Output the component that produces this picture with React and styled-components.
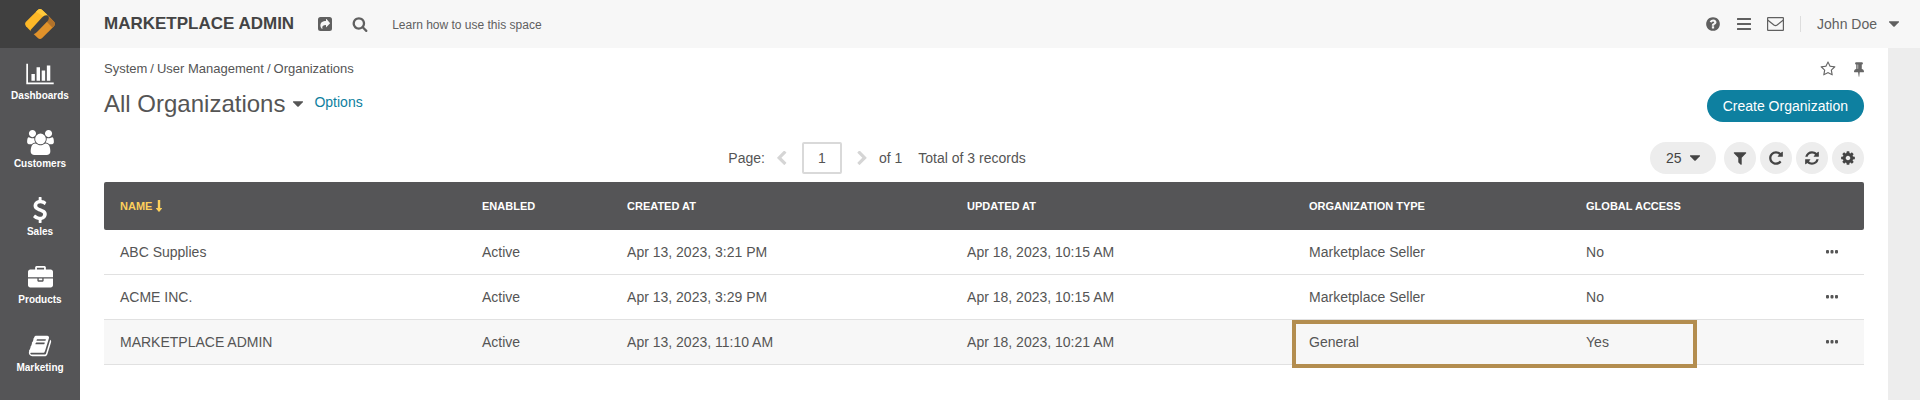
import React from "react";
import styled, { createGlobalStyle } from "styled-components";

const GlobalStyle = createGlobalStyle`
  *, *::before, *::after { box-sizing: border-box; }
  body {
    margin: 0;
    background: #ededed;
    color: #555555;
    font-family: "Liberation Sans", Arial, sans-serif;
    font-size: 14px;
    line-height: 16px;
  }
  button, input, select { font: inherit; color: inherit; margin: 0; }
  a { color: inherit; text-decoration: none; }
`;

const icons = {
  chart: ["0 0 2048 1792", "M640 896v512h-256v-512h256zm384-512v1024h-256v-1024h256zm1024 1152v128h-2048v-1536h128v1408h1920zm-640-896v768h-256v-768h256zm384-384v1152h-256v-1152h256z"],
  users: ["0 0 1920 1792", "M593 896q-162 5-265 128h-134q-82 0-138-40.500t-56-118.500q0-353 124-353 6 0 43.500 21t97.500 42.500 119 21.500q67 0 133-23-5 37-5 66 0 139 81 256zm1071 637q0 120-73 189.500t-194 69.500h-874q-121 0-194-69.500t-73-189.500q0-53 3.500-103.500t14-109 26.500-108.500 43-97.500 62-81 85.500-53.500 111.500-20q10 0 43 21.500t73 48 107 48 135 21.500 135-21.500 107-48 73-48 43-21.500q61 0 111.500 20t85.500 53.500 62 81 43 97.500 26.500 108.500 14 109 3.500 103.500zm-1024-1277q0 106-75 181t-181 75-181-75-75-181 75-181 181-75 181 75 75 181zm704 384q0 159-112.500 271.500t-271.500 112.500-271.500-112.500-112.500-271.500 112.500-271.500 271.500-112.500 271.500 112.500 112.500 271.500zm576 225q0 78-56 118.500t-138 40.500h-134q-103-123-265-128 81-117 81-256 0-29-5-66 66 23 133 23 59 0 119-21.500t97.500-42.500 43.500-21q124 0 124 353zm-128-609q0 106-75 181t-181 75-181-75-75-181 75-181 181-75 181 75 75 181z"],
  dollar: ["0 0 1792 1792", "M1362 1185q0 153-99.500 263.500t-258.500 136.500v175q0 14-9 23t-23 9h-135q-13 0-22.500-9.500t-9.500-22.500v-175q-66-9-127.500-31t-101.500-44.500-74-48-46.500-37.500-17.500-18q-17-21-2-41l103-135q7-10 23-12 15-2 24 9l2 2q113 99 243 125 37 8 74 8 81 0 142.500-43t61.500-122q0-28-15-53t-33.500-42-58.500-37.500-66-32-80-32.500q-39-16-61.500-25t-61.500-26.500-62.500-31-56.500-35.500-53.500-42.500-43.500-49-35.500-58-21-66.500-8.500-78q0-138 98-242t255-134v-180q0-13 9.500-22.500t22.500-9.500h135q14 0 23 9t9 23v176q57 6 110.500 23t87 33.500 63.500 37.500 39 29 15 14q17 18 5 38l-81 146q-8 15-23 16-14 3-27-7-3-3-14.500-12t-39-26.500-58.500-32-74.500-26-85.500-11.500q-95 0-155 43t-60 111q0 26 8.500 48t29.500 41.500 39.500 33 56 31 60.500 27 70 27.500q53 20 81 31.500t76 35 75.500 42.500 62 50 53 63.500 31.500 76.500 13 94z"],
  briefcase: ["0 0 1792 1792", "M640 256h512v-128h-512v128zm1152 640v480q0 66-47 113t-113 47h-1472q-66 0-113-47t-47-113v-480h672v160q0 26 19 45t45 19h320q26 0 45-19t19-45v-160h672zm-768 0v128h-256v-128h256zm768-480v384h-1792v-384q0-66 47-113t113-47h352v-160q0-40 28-68t68-28h576q40 0 68 28t28 68v160h352q66 0 113 47t47 113z"],
  book: ["0 0 1792 1792", "M1703 478q40 57 18 129l-275 906q-19 64-76.500 107.500t-122.500 43.500h-923q-77 0-148.500-53.500t-99.500-131.500q-24-67-2-127 0-4 3-27t4-37q1-8-3-21.500t-3-19.500q2-11 8-21t16.500-23.500 16.500-23.500q23-38 45-91.500t30-91.500q3-10 .5-30t-.5-28q3-11 17-28t17-23q21-36 42-92t25-90q1-9-2.500-32t.5-28q4-13 22-30.500t22-22.500q19-26 42.500-84.500t27.500-96.500q1-8-3-25.500t-2-26.500q2-8 9-18t18-23 17-21q8-12 16.500-30.500t15-35 16-36 19.500-32 26.500-23.500 36-11.500 47.500 5.500l-1 3q38-9 51-9h761q74 0 114 56t18 130l-274 906q-36 119-71.500 153.500t-128.500 34.500h-869q-27 0-38 15-11 16-1 43 24 70 144 70h923q29 0 56-15.500t35-41.500l300-987q7-22 5-57 38 15 59 43zm-1064 2q-4 13 2 22.500t20 9.500h608q13 0 25.500-9.500t16.500-22.500l21-64q4-13-2-22.500t-20-9.500h-608q-13 0-25.500 9.500t-16.500 22.500zm-83 256q-4 13 2 22.500t20 9.500h608q13 0 25.500-9.500t16.500-22.500l21-64q4-13-2-22.500t-20-9.500h-608q-13 0-25.500 9.500t-16.500 22.500z"],
  share: ["0 0 14 14", "M2.500 0h9a2.500 2.500 0 0 1 2.500 2.500v9a2.500 2.500 0 0 1-2.500 2.500h-9a2.500 2.500 0 0 1-2.500-2.500v-9a2.500 2.500 0 0 1 2.500-2.500zM8 2.200v1.900c-3.400 0-5.600 1.500-5.600 4.400 0 1.500.7 2.700 1.700 3.400.2.100.4 0 .3-.3-.6-2.600.6-3.700 3.600-3.700v2q0 .6.500.2l3.400-3.500q.3-.3 0-.6l-3.400-3.900q-.5-.4-.5.100z"],
  search: ["0 0 1792 1792", "M1216 832q0-185-131.500-316.500t-316.500-131.500-316.500 131.500-131.500 316.500 131.500 316.500 316.500 131.500 316.500-131.500 131.500-316.500zm512 832q0 52-38 90t-90 38q-54 0-90-38l-343-342q-179 124-399 124-143 0-273.500-55.500t-225-150-150-225-55.500-273.500 55.500-273.500 150-225 225-150 273.500-55.500 273.500 55.500 225 150 150 225 55.500 273.500q0 220-124 399l343 343q37 37 37 90z"],
  help: ["0 0 1792 1792", "M1024 1376v-192q0-14-9-23t-23-9h-192q-14 0-23 9t-9 23v192q0 14 9 23t23 9h192q14 0 23-9t9-23zm256-672q0-88-55.500-163t-138.500-116-170-41q-243 0-371 213-15 24 8 42l132 100q7 6 19 6 16 0 25-12 53-68 86-92 34-24 86-24 48 0 85.500 26t37.500 59q0 38-20 61t-68 45q-63 28-115.500 86.500t-52.500 125.500v36q0 14 9 23t23 9h192q14 0 23-9t9-23q0-19 21.500-49.500t54.500-49.500q32-18 49-28.500t46-35 44.500-48 28-60.500 12.500-81zm384 192q0 209-103 385.500t-279.500 279.500-385.500 103-385.500-103-279.500-279.500-103-385.500 103-385.500 279.500-279.500 385.500-103 385.500 103 279.500 279.500 103 385.500z"],
  bars: ["0 0 14 14", "M.5 1h13a.5.5 0 0 1 .5.500v1a.5.5 0 0 1-.5.500h-13a.5.5 0 0 1-.5-.5v-1a.5.5 0 0 1 .5-.5zm0 5h13a.5.5 0 0 1 .5.500v1a.5.5 0 0 1-.5.500h-13a.5.5 0 0 1-.5-.5v-1a.5.5 0 0 1 .5-.5zm0 5h13a.5.5 0 0 1 .5.500v1a.5.5 0 0 1-.5.500h-13a.5.5 0 0 1-.5-.5v-1a.5.5 0 0 1 .5-.5z"],
  star: ["0 0 1792 1792", "M1201 1004l306-297-422-62-189-382-189 382-422 62 306 297-73 421 378-199 377 199zm527-357q0 22-26 48l-363 354 86 500q1 7 1 20 0 50-41 50-19 0-40-12l-449-236-449 236q-22 12-40 12-21 0-31.500-14.500t-10.500-35.500q0-6 2-20l86-500-364-354q-25-27-25-48 0-37 56-46l502-73 225-455q19-41 49-41t49 41l225 455 502 73q56 9 56 46z"],
  pin: ["320 128 1152 1664", "M800 864v-448q0-14-9-23t-23-9-23 9-9 23v448q0 14 9 23t23 9 23-9 9-23zm672 352q0 26-19 45t-45 19h-429l-51 483q-2 12-10.500 20.500t-20.500 8.500h-1q-27 0-32-27l-76-485h-404q-26 0-45-19t-19-45q0-123 78.500-221.500t177.500-98.500v-512q-52 0-90-38t-38-90 38-90 90-38h640q52 0 90 38t38 90-38 90-90 38v512q99 0 177.500 98.500t78.500 221.500z"],
  caret: ["384 640 1024 576", "M1408 704q0 26-19 45l-448 448q-19 19-45 19t-45-19l-448-448q-19-19-19-45t19-45 45-19h896q26 0 45 19t19 45z"],
  left: ["410 70 1100 1570", "M1427 301l-531 531 531 531q19 19 19 45t-19 45l-166 166q-19 19-45 19t-45-19l-742-742q-19-19-19-45t19-45l742-742q19-19 45-19t45 19l166 166q19 19 19 45t-19 45z"],
  right: ["310 70 1100 1570", "M1363 877l-742 742q-19 19-45 19t-45-19l-166-166q-19-19-19-45t19-45l531-531-531-531q-19-19-19-45t19-45l166-166q19-19 45-19t45 19l742 742q19 19 19 45t-19 45z"],
  filter: ["0 0 1792 1792", "M1595 295q17 41-14 70l-493 493v742q0 42-39 59-13 5-25 5-27 0-45-19l-256-256q-19-19-19-45v-486l-493-493q-31-29-14-70 17-39 59-39h1280q42 0 59 39z"],
  repeat: ["0 0 1792 1792", "M1664 256v448q0 26-19 45t-45 19h-448q-42 0-59-40-17-39 14-69l138-138q-148-137-349-137-104 0-198.500 40.500t-163.500 109.500-109.500 163.500-40.500 198.500 40.500 198.500 109.500 163.500 163.500 109.500 198.500 40.500q119 0 225-52t179-147q7-10 23-12 15 0 25 9l137 138q9 8 9.500 20.500t-7.500 22.500q-109 132-264 204.500t-327 72.500q-156 0-298-61t-245-164-164-245-61-298 61-298 164-245 245-164 298-61q147 0 284.500 55.500t244.500 156.500l130-129q29-31 70-14 39 17 39 59z"],
  refresh: ["0 0 1792 1792", "M1639 1056q0 5-1 7-64 268-268 434.500t-478 166.500q-146 0-282.500-55t-243.500-157l-129 129q-19 19-45 19t-45-19-19-45v-448q0-26 19-45t45-19h448q26 0 45 19t19 45-19 45l-137 137q71 66 161 102t187 36q134 0 250-65t186-179q11-17 53-117 8-23 30-23h192q13 0 22.500 9.500t9.500 22.500zm25-800v448q0 26-19 45t-45 19h-448q-26 0-45-19t-19-45 19-45l138-138q-148-137-349-137-134 0-250 65t-186 179q-11 17-53 117-8 23-30 23h-199q-13 0-22.500-9.500t-9.500-22.500v-7q65-268 270-434.500t480-166.500q146 0 284 55.500t245 156.500l130-129q19-19 45-19t45 19 19 45z"],
  cog: ["0 0 1792 1792", "M1152 896q0-106-75-181t-181-75-181 75-75 181 75 181 181 75 181-75 75-181zm512-109v222q0 12-8 23t-20 13l-185 28q-19 54-39 91 35 50 107 138 10 12 10 25t-9 23q-27 37-99 108t-94 71q-12 0-26-9l-138-108q-44 23-91 38-16 136-29 186-7 28-36 28h-222q-14 0-24.500-8.500t-11.500-21.500l-28-184q-49-16-90-37l-141 107q-10 9-25 9-14 0-25-11-126-114-165-168-7-10-7-23 0-12 8-23 15-21 51-66.500t54-70.500q-27-50-41-99l-183-27q-13-2-21-12.500t-8-23.500v-222q0-12 8-23t19-13l186-28q14-46 39-92-40-57-107-138-10-12-10-24 0-10 9-23 26-36 98.500-107.500t94.500-71.500q13 0 26 10l138 107q44-23 91-38 16-136 29-186 7-28 36-28h222q14 0 24.500 8.500t11.500 21.500l28 184q49 16 90 37l142-107q9-9 24-9 13 0 25 10 129 119 165 170 7 8 7 22 0 12-8 23-15 21-51 66.500t-54 70.500q26 50 41 98l183 28q13 2 21 12.500t8 23.500z"],
  dots: ["0 0 12 4", "M1 0h1q1 0 1 1v1.500q0 1-1 1h-1q-1 0-1-1v-1.500q0-1 1-1zm4.500 0h1q1 0 1 1v1.500q0 1-1 1h-1q-1 0-1-1v-1.500q0-1 1-1zm4.500 0h1q1 0 1 1v1.500q0 1-1 1h-1q-1 0-1-1v-1.500q0-1 1-1z"],
  sort: ["0 0 6 12", "M1.800 0h2.400v8h1.600q.4 0 .2.400l-2.700 3.400q-.3.300-.6 0l-2.700-3.400q-.2-.4.200-.4h1.600z"],
};

function Icon({ name, w, h = w }) {
  const [box, path] = icons[name];
  return (
    <svg width={w} height={h} viewBox={box} fill="currentColor" fillRule="evenodd" aria-hidden="true">
      <path d={path} />
    </svg>
  );
}

const Shell = styled.div`
  display: flex;
  min-height: 100vh;
  svg { display: block; flex: none; }
`;

const Sidebar = styled.aside`
  flex: none;
  width: 80px;
  background: #555557;
  color: #ffffff;
`;

const Logo = styled.a`
  display: flex;
  align-items: center;
  justify-content: center;
  height: 48px;
  background: #404040;
`;

const Menu = styled.nav`
  display: flex;
  flex-direction: column;
  padding-top: 12px;
`;

const MenuLink = styled.a`
  display: flex;
  flex-direction: column;
  align-items: center;
  height: 68px;
  font-size: 10px;
  font-weight: 700;
  line-height: 16px;
`;

const MenuIcon = styled.span`
  display: flex;
  align-items: center;
  height: 28px;
`;

const Page = styled.div`
  flex: 1;
  min-width: 0;
  display: flex;
  flex-direction: column;
`;

const TopBar = styled.header`
  display: flex;
  align-items: center;
  justify-content: space-between;
  height: 48px;
  padding: 0 21px 0 24px;
  background: #f7f7f7;
  color: #606060;
`;

const TopGroup = styled.div`
  display: flex;
  align-items: center;
  gap: ${(p) => p.$gap}px;
`;

const Brand = styled.span`
  margin-right: 4px;
  color: #444444;
  font-size: 17px;
  font-weight: 700;
  line-height: 20px;
`;

const HelpLink = styled.a`
  margin-left: 4px;
  padding-top: 2px;
  font-size: 12px;
`;

const PlainButton = styled.button`
  display: flex;
  align-items: center;
  gap: ${(p) => p.$gap || 0}px;
  padding: 0;
  border: 0;
  background: none;
  color: inherit;
  cursor: pointer;
`;

const UserMenu = styled(PlainButton)`
  height: 16px;
  padding-left: 16px;
  border-left: 1px solid #dddddd;
`;

const Content = styled.main`
  flex: 1;
  margin-right: 32px;
  padding: 12px 24px 32px;
  background: #ffffff;
`;

const Line = styled.div`
  display: flex;
  align-items: ${(p) => p.$align || "center"};
  justify-content: space-between;
`;

const Crumbs = styled.nav`
  display: flex;
  gap: 3px;
  font-size: 13px;
  line-height: 18px;
`;

const PageActions = styled.div`
  display: flex;
  align-items: center;
  gap: 18px;
  color: #666666;
`;

const TitleLine = styled.div`
  display: flex;
  align-items: flex-start;
  gap: 11px;
  padding-top: 12px;
`;

const Title = styled.h1`
  margin: 0;
  font-size: 24px;
  font-weight: 400;
  line-height: 28px;
`;

const OptionsLink = styled.a`
  color: #0e80a0;
  line-height: 24px;
`;

const CreateButton = styled.button`
  height: 32px;
  margin-top: 12px;
  padding: 0 16px;
  border: 0;
  border-radius: 16px;
  background: #0e80a0;
  color: #ffffff;
  cursor: pointer;
`;

const Toolbar = styled.div`
  display: flex;
  align-items: center;
  margin: 20px 0 8px;
`;

const Pager = styled.div`
  flex: 1;
  display: flex;
  align-items: center;
  justify-content: center;
  gap: 12px;
`;

const PageArrow = styled(PlainButton)`
  color: #d5d5d5;
`;

const PageInput = styled.input`
  width: 40px;
  height: 32px;
  margin: 0 3px;
  padding: 0;
  border: 2px solid #d9d9d9;
  border-radius: 2px;
  background: #ffffff;
  text-align: center;
`;

const Total = styled.span`
  margin-left: 4px;
`;

const Tools = styled.div`
  display: flex;
  gap: 4px;
  color: #444444;
`;

const SizePicker = styled.label`
  position: relative;
  margin-right: 4px;
  svg {
    position: absolute;
    top: 13px;
    right: 16px;
    pointer-events: none;
  }
`;

const SizeSelect = styled.select`
  appearance: none;
  width: 66px;
  height: 32px;
  padding: 0 16px;
  border: 0;
  border-radius: 16px;
  background: #ededed;
`;

const RoundButton = styled.button`
  display: flex;
  align-items: center;
  justify-content: center;
  width: 32px;
  height: 32px;
  padding: 0;
  border: 0;
  border-radius: 50%;
  background: #ededed;
  cursor: pointer;
`;

const GridArea = styled.div`
  position: relative;
`;

const Table = styled.table`
  width: 100%;
  border-spacing: 0;
  table-layout: fixed;
`;

const Col = styled.col`
  width: ${(p) => p.$share}%;
`;

const HeadCell = styled.th`
  height: 48px;
  padding: 0 16px;
  background: #555557;
  color: ${(p) => (p.$sorted ? "#fdd05b" : "#ffffff")};
  font-size: 11px;
  text-align: left;
  text-transform: uppercase;
  &:first-child { border-radius: 2px 0 0 2px; }
  &:last-child { border-radius: 0 2px 2px 0; }
`;

const SortButton = styled(PlainButton)`
  font-weight: 700;
  text-transform: uppercase;
`;

const Row = styled.tr`
  background: ${(p) => (p.$hovered ? "#f7f7f7" : "#ffffff")};
`;

const Cell = styled.td`
  height: 45px;
  padding: 0 16px;
  border-bottom: 1px solid #e1e1e1;
`;

const RowMenu = styled(PlainButton)`
  height: 16px;
  margin: 0 10px 0 auto;
`;

const Highlight = styled.div`
  position: absolute;
  left: 67.5%;
  bottom: -3px;
  width: 23%;
  height: 48px;
  border: 4px solid #b38d4f;
  pointer-events: none;
`;

const menu = [
  { label: "Dashboards", icon: "chart", w: 28, h: 24 },
  { label: "Customers", icon: "users", w: 27, h: 25 },
  { label: "Sales", icon: "dollar", w: 26 },
  { label: "Products", icon: "briefcase", w: 25 },
  { label: "Marketing", icon: "book", w: 24 },
];

const columns = [
  { title: "Name", share: 20.57, sorted: true },
  { title: "Enabled", share: 8.24 },
  { title: "Created at", share: 19.32 },
  { title: "Updated at", share: 19.43 },
  { title: "Organization type", share: 15.74 },
  { title: "Global access", share: 10.7 },
];

const rows = [
  ["ABC Supplies", "Active", "Apr 13, 2023, 3:21 PM", "Apr 18, 2023, 10:15 AM", "Marketplace Seller", "No"],
  ["ACME INC.", "Active", "Apr 13, 2023, 3:29 PM", "Apr 18, 2023, 10:15 AM", "Marketplace Seller", "No"],
  ["MARKETPLACE ADMIN", "Active", "Apr 13, 2023, 11:10 AM", "Apr 18, 2023, 10:21 AM", "General", "Yes"],
];

function LogoMark() {
  return (
    <svg width="30" height="30" viewBox="0 0 30 30" aria-hidden="true">
      <path d="M12.800 1q2.200-1.800 4.400 0L24 7.500 7.500 24 1 17.200q-1.800-2.200 0-4.400z" fill="#fdb827" />
      <path d="M12.800 1q2.200-1.800 4.400 0L22 5.600l-3 2.200-8-5z" fill="#ffc93c" />
      <path d="M24 7.500l5 5.300q1.800 2.200 0 4.400L17.200 29q-2.200 1.800-4.400 0L6.500 23z" fill="#e1922a" />
      <path d="M22.500 6l6.500 6.800q1.800 2.200 0 4.400l-1.500 1.500L22 13z" fill="#b1722b" />
      <path d="M5.800 20.800L17 8.500q3-3 6.200-1.800 1.600 3-1 5.800L12 23q-3 3-5.800 2-1.800-2-.4-4.200z" fill="#404040" />
    </svg>
  );
}

export default function App() {
  return (
    <>
      <GlobalStyle />
      <Shell>
        <Sidebar>
          <Logo href="#" aria-label="Home"><LogoMark /></Logo>
          <Menu aria-label="Main menu">
            {menu.map((m) => (
              <MenuLink href="#" key={m.label}>
                <MenuIcon><Icon name={m.icon} w={m.w} h={m.h} /></MenuIcon>
                {m.label}
              </MenuLink>
            ))}
          </Menu>
        </Sidebar>
        <Page>
          <TopBar>
            <TopGroup $gap={20}>
              <Brand>MARKETPLACE ADMIN</Brand>
              <PlainButton aria-label="Share"><Icon name="share" w={14} /></PlainButton>
              <PlainButton aria-label="Search"><Icon name="search" w={16} /></PlainButton>
              <HelpLink href="#">Learn how to use this space</HelpLink>
            </TopGroup>
            <TopGroup $gap={16}>
              <PlainButton aria-label="Help"><Icon name="help" w={16} /></PlainButton>
              <PlainButton aria-label="Shortcuts"><Icon name="bars" w={14} /></PlainButton>
              <PlainButton aria-label="Mail">
                <svg width="17" height="14" viewBox="0 0 17 14" fill="none" stroke="currentColor" strokeWidth="1.200" aria-hidden="true">
                  <rect x=".6" y=".6" width="15.800" height="12.800" rx=".5" />
                  <path d="M.6 3l6.300 5q1.600 1.200 3.200 0l6.300-5" />
                </svg>
              </PlainButton>
              <UserMenu $gap={12}>John Doe<Icon name="caret" w={10} h={6} /></UserMenu>
            </TopGroup>
          </TopBar>
          <Content>
            <Line>
              <Crumbs aria-label="Breadcrumb">
                <span>System</span><span>/</span><span>User Management</span><span>/</span><span>Organizations</span>
              </Crumbs>
              <PageActions>
                <PlainButton aria-label="Add to favorites"><Icon name="star" w={16} /></PlainButton>
                <PlainButton aria-label="Pin"><Icon name="pin" w={10} h={15} /></PlainButton>
              </PageActions>
            </Line>
            <Line $align="flex-start">
              <TitleLine>
                <Title><PlainButton $gap={8}>All Organizations<Icon name="caret" w={10} h={6} /></PlainButton></Title>
                <OptionsLink href="#">Options</OptionsLink>
              </TitleLine>
              <CreateButton>Create Organization</CreateButton>
            </Line>
            <Toolbar>
              <Pager>
                <label htmlFor="page">Page:</label>
                <PageArrow aria-label="Previous page"><Icon name="left" w={10} h={14} /></PageArrow>
                <PageInput id="page" defaultValue="1" />
                <PageArrow aria-label="Next page"><Icon name="right" w={10} h={14} /></PageArrow>
                <span>of 1</span>
                <Total>Total of 3 records</Total>
              </Pager>
              <Tools>
                <SizePicker>
                  <SizeSelect aria-label="Records per page" defaultValue="25">
                    <option>10</option>
                    <option>25</option>
                    <option>50</option>
                  </SizeSelect>
                  <Icon name="caret" w={10} h={6} />
                </SizePicker>
                <RoundButton aria-label="Filter"><Icon name="filter" w={16} /></RoundButton>
                <RoundButton aria-label="Reset"><Icon name="repeat" w={16} /></RoundButton>
                <RoundButton aria-label="Refresh"><Icon name="refresh" w={16} /></RoundButton>
                <RoundButton aria-label="Grid settings"><Icon name="cog" w={16} /></RoundButton>
              </Tools>
            </Toolbar>
            <GridArea>
              <Table>
                <colgroup>
                  {columns.map((c) => <Col key={c.title} $share={c.share} />)}
                  <Col $share={6} />
                </colgroup>
                <thead>
                  <tr>
                    {columns.map((c) => (
                      <HeadCell key={c.title} $sorted={c.sorted} scope="col">
                        {c.sorted ? <SortButton $gap={4}>{c.title}<Icon name="sort" w={6} h={12} /></SortButton> : c.title}
                      </HeadCell>
                    ))}
                    <HeadCell as="td" />
                  </tr>
                </thead>
                <tbody>
                  {rows.map((r, i) => (
                    <Row key={r[0]} $hovered={i === 2}>
                      {r.map((text, c) => <Cell key={c}>{text}</Cell>)}
                      <Cell><RowMenu aria-label={`Actions for ${r[0]}`}><Icon name="dots" w={12} h={4} /></RowMenu></Cell>
                    </Row>
                  ))}
                </tbody>
              </Table>
              <Highlight />
            </GridArea>
          </Content>
        </Page>
      </Shell>
    </>
  );
}
